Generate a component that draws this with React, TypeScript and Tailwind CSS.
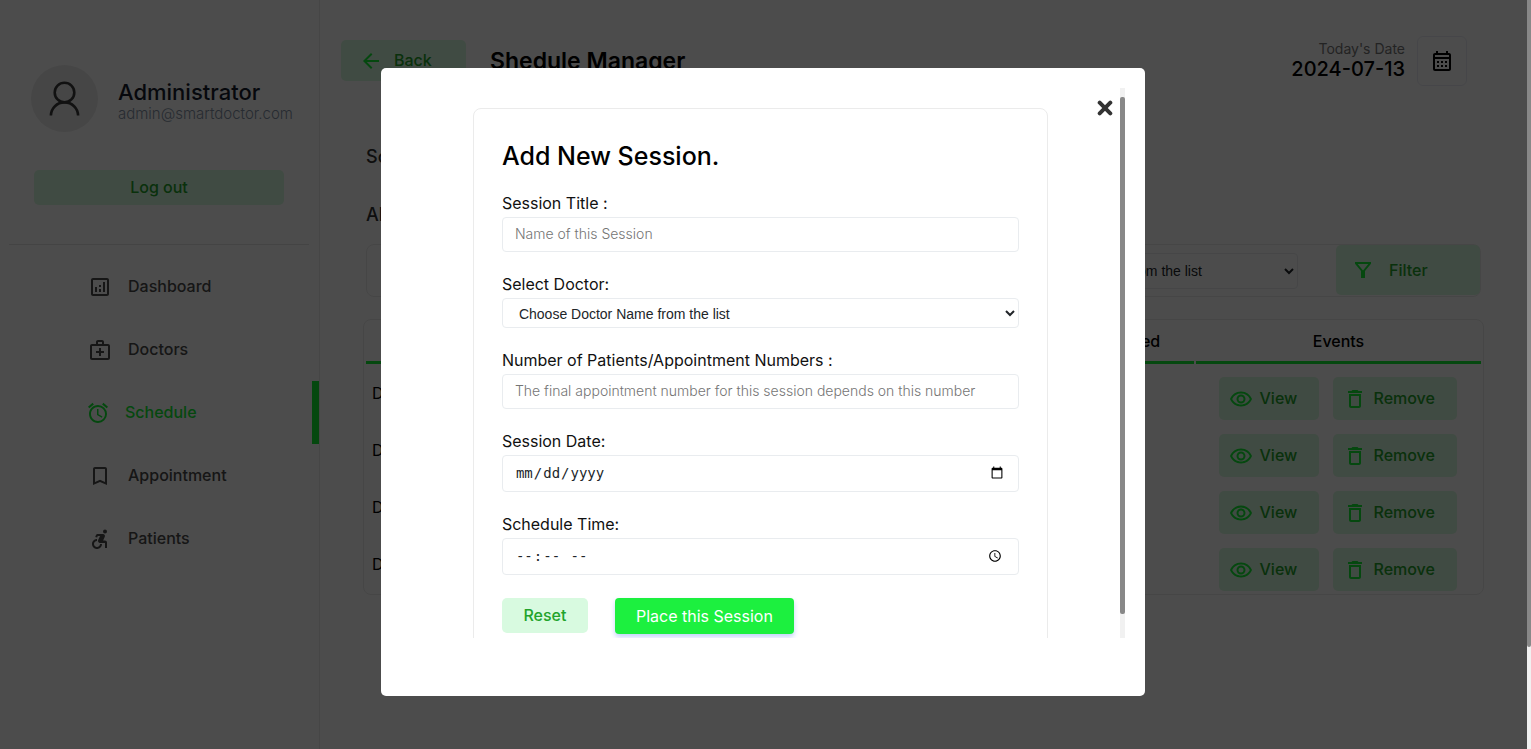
import type { ReactNode } from "react";
import {
  MdAccessAlarm,
  MdAccessibleForward,
  MdArrowBack,
  MdDeleteOutline,
  MdOutlineAnalytics,
  MdOutlineBookmarkBorder,
  MdOutlineCalendarMonth,
  MdOutlineMedicalServices,
  MdOutlineRemoveRedEye,
} from "react-icons/md";

const softButton =
  "flex items-center rounded-[5px] bg-[#d8fae0] text-base font-medium text-[#22a32b]";

const fieldBox =
  "block w-full rounded border border-[#e9ecef] bg-white px-3 text-[#212529] outline-none";

function UserGlyph() {
  return (
    <svg viewBox="0 0 34 36" className="h-9 w-[34px]" fill="none" stroke="#3b3b3b" strokeWidth="2.6" aria-hidden="true">
      <circle cx="16.500" cy="11.500" r="9.8" />
      <path d="M2.900 34.500C3.100 27.200 8.900 21.400 16.500 21.400S29.900 27.200 30.100 34.500" />
    </svg>
  );
}

function FunnelGlyph() {
  return (
    <svg viewBox="0 0 16 16" className="h-4 w-4" aria-hidden="true">
      <path fill="#11f034" d="M0 0H16V1.700L10 9V16H6V9L0 1.700ZM2.700 2L8 8.400L13.300 2Z" fillRule="evenodd" />
    </svg>
  );
}

function CloseGlyph() {
  return (
    <svg viewBox="0 0 16 16" className="h-4 w-4" stroke="#333" strokeWidth="4" strokeLinecap="round" aria-hidden="true">
      <path d="M2.700 2.700L13.300 13.300M13.300 2.700L2.700 13.300" />
    </svg>
  );
}

const menu = [
  { label: "Dashboard", Icon: MdOutlineAnalytics },
  { label: "Doctors", Icon: MdOutlineMedicalServices },
  { label: "Schedule", Icon: MdAccessAlarm, active: true },
  { label: "Appointment", Icon: MdOutlineBookmarkBorder },
  { label: "Patients", Icon: MdAccessibleForward },
];

function Sidebar() {
  return (
    <aside className="w-80 shrink-0 border-r border-[#ebebeb]">
      <div className="flex items-center gap-5 pt-[65px] pl-[31px]">
        <div className="flex size-[67px] shrink-0 items-center justify-center rounded-full bg-[#ebebeb]">
          <UserGlyph />
        </div>
        <div className="pt-1.5">
          <p className="text-[22px] leading-6 font-medium text-[#161c2d]">Administrator</p>
          <p className="text-[15px] leading-5 font-light text-[#8492a6]">admin@smartdoctor.com</p>
        </div>
      </div>
      <div className="pt-[38px] pr-[35px] pl-[34px]">
        <button type="button" className={`${softButton} h-[35px] w-full justify-center`}>
          <span className="pb-0.5">Log out</span>
        </button>
      </div>
      <hr className="mt-[39px] mr-[10px] ml-[9px] border-[#e4e4e4]" />
      <nav className="mt-[10px]">
        {menu.map(({ label, Icon, active }) => (
          <a
            key={label}
            href="#"
            className={
              active
                ? "flex h-[63px] items-center gap-[15px] border-r-[7px] border-[#11f034] pl-[86px] text-base font-medium text-[#11f034]"
                : "flex h-[63px] items-center gap-4 pl-[88px] text-base font-medium text-[#4b4b4b]"
            }
          >
            <Icon size={24} />
            <span className="pb-0.5">{label}</span>
          </a>
        ))}
      </nav>
    </aside>
  );
}

const sessions = [
  { title: "Demo Session", doctor: "Test Doctor", when: "2050-01-01 18:00", max: 50 },
  { title: "Demo Session", doctor: "Test Doctor", when: "2022-06-10 20:36", max: 1 },
  { title: "Demo Session", doctor: "Test Doctor", when: "2022-06-10 20:33", max: 12 },
  { title: "Demo Session", doctor: "Test Doctor", when: "2022-06-10 12:32", max: 1 },
];

function Head({ children, width }: { children: ReactNode; width?: string }) {
  return (
    <th className={`h-[42px] border-b-[3px] border-[#11f034] pb-px text-base font-medium ${width ?? ""}`}>
      {children}
    </th>
  );
}

function Main() {
  return (
    <main className="min-w-0 flex-1 pb-10">
      <header className="flex items-center pt-9 pr-[60px] pl-[21px]">
        <button type="button" className={`${softButton} mb-px h-[41px] w-[125px] gap-[11px] pl-[18px]`}>
          <MdArrowBack size={24} color="#11f034" />
          <span className="pb-0.5">Back</span>
        </button>
        <h1 className="ml-6 flex-1 text-[23px] font-semibold">Shedule Manager</h1>
        <div className="text-right">
          <p className="text-sm leading-4 text-[#777777]">Today's Date</p>
          <p className="text-xl leading-6 font-medium">2024-07-13</p>
        </div>
        <button
          type="button"
          aria-label="Calendar"
          className="ml-3 flex size-[50px] items-center justify-center rounded-md border border-[#ebecf5]"
        >
          <MdOutlineCalendarMonth size={24} />
        </button>
      </header>

      <h2 className="mt-[57px] ml-[46px] text-lg font-medium text-[#313131]">Schedule a Session</h2>
      <h2 className="mt-[30px] ml-[46px] text-lg font-medium text-[#313131]">All Sessions (4)</h2>

      <form className="mt-[15px] mr-[46px] ml-[46px] flex h-[53px] items-center rounded-lg border border-[#ebebeb]">
        <label htmlFor="filter-date" className="ml-12">
          Date:
        </label>
        <input id="filter-date" type="date" className={`${fieldBox} mx-4 h-9 flex-1`} />
        <label htmlFor="filter-doctor">Doctor:</label>
        <div className="mr-[38px] ml-4 w-[324px]">
          <select
            id="filter-doctor"
            className={`${fieldBox} h-9 font-['Liberation_Sans',sans-serif] text-sm`}
          >
            <option>Choose Doctor Name from the list</option>
          </select>
        </div>
        <button type="button" className={`${softButton} mb-px h-[50px] w-[144px] gap-[18px] pl-[19px]`}>
          <FunnelGlyph />
          <span>Filter</span>
        </button>
      </form>

      <div className="mt-[22px] mr-[43px] ml-[43px] rounded-lg border border-[#ebebeb]">
        <table className="w-full table-fixed border-separate border-spacing-[2px]">
          <thead>
            <tr>
              <Head>Session Title</Head>
              <Head>Doctor</Head>
              <Head>Date &amp; Time</Head>
              <Head width="w-[283px] pr-[6px]">Max num that can be booked</Head>
              <Head width="w-[285px]">Events</Head>
            </tr>
          </thead>
          <tbody>
            {sessions.map((s) => (
              <tr key={s.when} className="h-[55px]">
                <td className="pb-0.5 pl-1.5">{s.title}</td>
                <td>{s.doctor}</td>
                <td className="text-center">{s.when}</td>
                <td className="text-center">{s.max}</td>
                <td>
                  <div className="flex justify-center gap-[14px] pt-[10px] pr-0.5">
                    <button type="button" className={`${softButton} h-[43px] w-[100px] gap-[7px] pl-[10px]`}>
                      <MdOutlineRemoveRedEye size={24} color="#11f034" />
                      <span className="pb-0.5">View</span>
                    </button>
                    <button type="button" className={`${softButton} h-[43px] w-[124px] gap-[7px] pl-[10px]`}>
                      <MdDeleteOutline size={24} color="#11f034" />
                      <span className="pb-0.5">Remove</span>
                    </button>
                  </div>
                </td>
              </tr>
            ))}
          </tbody>
        </table>
      </div>
    </main>
  );
}

function Field({ id, label, children }: { id: string; label: string; children: ReactNode }) {
  return (
    <div className="mb-5">
      <label htmlFor={id} className="mb-[2px] block text-base leading-6 text-[#111111]">
        {label}
      </label>
      {children}
    </div>
  );
}

function SessionDialog() {
  return (
    <div
      role="dialog"
      aria-label="Add New Session"
      className="w-[764px] max-w-full rounded-[5px] bg-white px-5 pt-5 pb-[58px]"
    >
      <div className="flex h-[550px]">
        <div className="relative flex-1 overflow-hidden">
          <button type="button" aria-label="Close" className="absolute top-3 right-[7px]">
            <CloseGlyph />
          </button>
          <form className="mx-auto mt-5 w-4/5 rounded-lg border border-[#ebebeb] p-7">
            <h2 className="mb-4 text-[25px] leading-[38px] font-medium">Add New Session.</h2>
            <Field id="title" label="Session Title :">
              <input
                id="title"
                type="text"
                placeholder="Name of this Session"
                className={`${fieldBox} h-[35px] pb-0.5 text-sm font-light placeholder:text-[#757575]`}
              />
            </Field>
            <Field id="doctor" label="Select Doctor:">
              <select
                id="doctor"
                className={`${fieldBox} h-[30px] pt-px font-['Liberation_Sans',sans-serif] text-sm`}
              >
                <option>Choose Doctor Name from the list</option>
              </select>
            </Field>
            <Field id="count" label="Number of Patients/Appointment Numbers :">
              <input
                id="count"
                type="number"
                placeholder="The final appointment number for this session depends on this number"
                className={`${fieldBox} h-[35px] pb-0.5 text-sm font-light placeholder:text-[#757575]`}
              />
            </Field>
            <Field id="date" label="Session Date:">
              <input
                id="date"
                type="date"
                className={`${fieldBox} h-[37px] pb-px font-['DejaVu_Sans_Mono',monospace] text-sm`}
              />
            </Field>
            <Field id="time" label="Schedule Time:">
              <input
                id="time"
                type="time"
                className={`${fieldBox} h-[37px] pb-px font-['DejaVu_Sans_Mono',monospace] text-sm`}
              />
            </Field>
            <div className="flex items-start gap-[27px] pt-[3px]">
              <button type="reset" className={`${softButton} h-[35px] w-[86px] justify-center`}>
                <span className="pb-0.5">Reset</span>
              </button>
              <button
                type="button"
                className="h-9 w-[179px] rounded bg-[#1cf03f] text-base text-white shadow-[0_3px_5px_0_rgba(57,108,240,0.3)]"
              >
                Place this Session
              </button>
            </div>
          </form>
        </div>
        <div className="w-[5px] bg-[#f1f1f1] pt-[9px]">
          <div className="h-[517px] rounded-[2px] bg-[#888888]" />
        </div>
      </div>
    </div>
  );
}

export default function App() {
  return (
    <div className="flex min-h-screen bg-white font-[Inter,sans-serif] text-black">
      <div className="relative flex min-w-0 flex-1">
        <Sidebar />
        <Main />
        <div className="absolute inset-0 flex items-start justify-center bg-black/70 pt-[68px] pr-px">
          <SessionDialog />
        </div>
      </div>
      <div className="w-1 bg-[#f1f1f1]">
        <div className="h-[647px] rounded-b-[2px] bg-[#888888]" />
      </div>
    </div>
  );
}
